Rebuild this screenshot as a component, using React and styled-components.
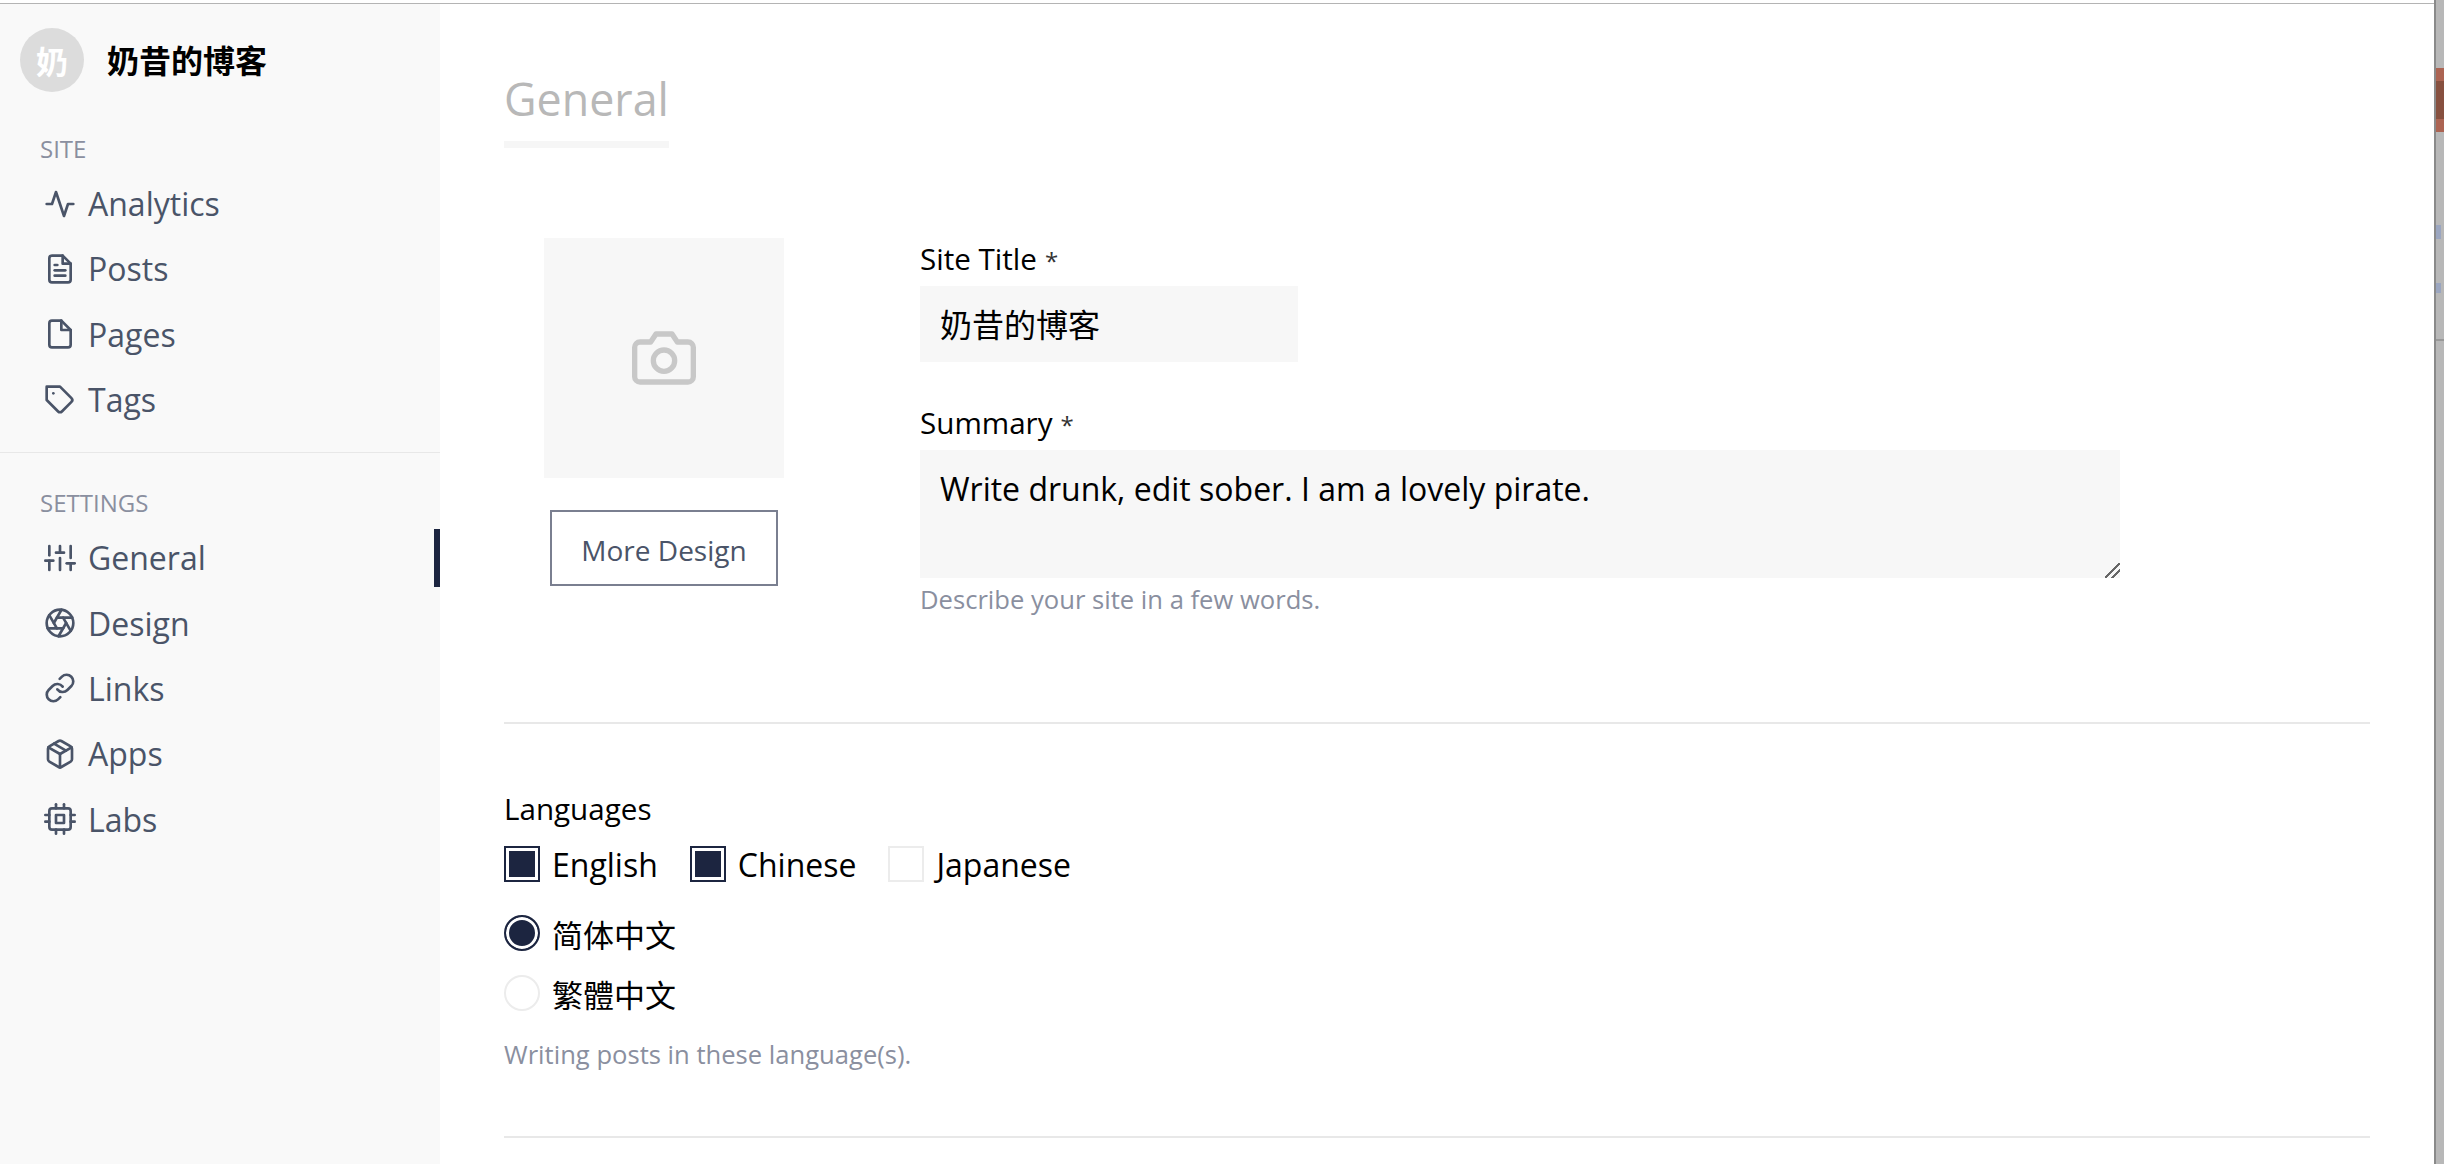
import React from 'react';
import styled, { createGlobalStyle } from 'styled-components';
import {
  FiActivity,
  FiAperture,
  FiCamera,
  FiCpu,
  FiFile,
  FiFileText,
  FiLink,
  FiPackage,
  FiSliders,
  FiTag,
} from 'react-icons/fi';

const FONT = '"Open Sans", "Noto Sans CJK SC", sans-serif';
const NAVY = '#1c2540';
const SLATE = '#4a5468';
const MUTED = '#8a8f9f';
const FIELD = '#f7f7f7';

const GlobalStyle = createGlobalStyle`
  html, body {
    margin: 0;
    height: 100%;
    overflow: hidden;
    background: #fff;
    font-family: ${FONT};
  }
  * { box-sizing: border-box; }
`;

const Screen = styled.div`
  display: flex;
  width: 2444px;
  height: 1164px;
  overflow: hidden;
`;

const Window = styled.div`
  display: flex;
  flex-direction: column;
  width: 2434px;
  padding-top: 3px;
  background: #fff;
`;

const WindowEdge = styled.div`
  flex: none;
  height: 1px;
  background: #b4b4b4;
`;

const Columns = styled.div`
  display: flex;
  flex: 1;
  min-height: 0;
`;

const Sidebar = styled.aside`
  flex: none;
  width: 440px;
  padding-top: 24px;
  background: #f9f9f9;
`;

const Brand = styled.div`
  display: flex;
  align-items: center;
  gap: 23px;
  margin: 0 0 45px 20px;
  font-size: 32px;
  font-weight: 700;
  color: #000;
`;

const BrandName = styled.span`
  margin-bottom: 2px;
`;

const Avatar = styled.div`
  display: flex;
  align-items: center;
  justify-content: center;
  width: 64px;
  height: 64px;
  border-radius: 50%;
  background: #dcdcdc;
  color: #fff;
`;

const NavTitle = styled.div`
  padding-left: 40px;
  height: 24px;
  line-height: 24px;
  font-size: 24px;
  color: ${MUTED};
  text-transform: uppercase;
`;

const NavList = styled.nav`
  margin-top: 10px;
`;

const NavItem = styled.div`
  position: relative;
  display: flex;
  align-items: center;
  gap: 12px;
  height: 65.3px;
  padding-left: 44px;
  font-size: 32px;
  color: ${SLATE};
  svg {
    flex: none;
    width: 32px;
    height: 32px;
  }
  ${({ $active }) =>
    $active &&
    `
    &::after {
      content: '';
      position: absolute;
      top: 4px;
      right: 0;
      width: 6px;
      height: 58px;
      background: ${NAVY};
    }
  `}
`;

const NavDivider = styled.div`
  height: 1px;
  margin: 20px 0 38px;
  background: #e8e8e8;
`;

const Main = styled.main`
  flex: 1;
  min-width: 0;
  padding: 0 64px;
`;

const Heading = styled.h1`
  display: inline-block;
  margin: 66px 0 0;
  height: 78px;
  line-height: 57px;
  border-bottom: 7px solid #f6f6f6;
  font-size: 44.8px;
  font-weight: 400;
  color: #b8b8b8;
`;

const Section = styled.section`
  display: flex;
  gap: 136px;
  padding: 90px 0 104px 40px;
  border-bottom: 2px solid #e8e8e8;
`;

const CoverColumn = styled.div`
  display: flex;
  flex: none;
  flex-direction: column;
  align-items: center;
  width: 240px;
`;

const Cover = styled.div`
  display: flex;
  align-items: center;
  justify-content: center;
  width: 240px;
  height: 240px;
  background: ${FIELD};
  color: #c8c8c8;
  svg {
    width: 64px;
    height: 64px;
  }
`;

const OutlineButton = styled.button`
  width: 228px;
  height: 76px;
  margin-top: 32px;
  padding: 3px 0 0;
  border: 2px solid #7a7f90;
  border-radius: 0;
  background: #fff;
  font-family: ${FONT};
  font-size: 28px;
  color: ${SLATE};
`;

const Fields = styled.div`
  flex: none;
  width: 1200px;
`;

const Label = styled.label`
  display: block;
  height: 48px;
  line-height: 42px;
  font-size: 29.6px;
  color: #000;
`;

const Required = styled.span`
  margin-left: 8px;
  font-size: 24px;
  color: #333;
`;

const TextInput = styled.input`
  display: block;
  width: 378px;
  height: 76px;
  margin-bottom: 40px;
  padding: 0 20px 2px;
  border: 0;
  border-radius: 0;
  outline: 0;
  background: ${FIELD};
  font-family: ${FONT};
  font-size: 32px;
  color: #000;
`;

const TextArea = styled.textarea`
  display: block;
  width: 1200px;
  height: 128px;
  padding: 17px 20px;
  border: 0;
  border-radius: 0;
  outline: 0;
  background: ${FIELD};
  font-family: ${FONT};
  font-size: 32px;
  line-height: 44px;
  color: #000;
  &::-webkit-resizer {
    background: linear-gradient(
      135deg,
      transparent calc(50% - 1px),
      #666 calc(50% - 1px) calc(50% + 1px),
      transparent calc(50% + 1px) calc(50% + 4px),
      #666 calc(50% + 4px) calc(50% + 6px),
      transparent calc(50% + 6px)
    );
  }
`;

const Help = styled.div`
  margin-top: ${({ $top }) => $top || 4}px;
  height: 36px;
  line-height: 36px;
  font-size: 25.6px;
  color: ${MUTED};
`;

const LanguageSection = styled.section`
  padding: 64px 0 63px;
  border-bottom: 2px solid #e8e8e8;
`;

const CheckRow = styled.div`
  display: flex;
  gap: 32px;
  margin: -2px 0 9px;
`;

const Option = styled.label`
  display: flex;
  align-items: center;
  gap: 12px;
  height: 60px;
  font-size: ${({ $cjk }) => ($cjk ? 31 : 32)}px;
  color: #000;
`;

const Check = styled.input`
  appearance: none;
  flex: none;
  width: 36px;
  height: 36px;
  margin: 0;
  border: 2px solid ${({ checked }) => (checked ? NAVY : '#ececec')};
  border-radius: ${({ type }) => (type === 'radio' ? '50%' : '0')};
  background: ${({ checked }) => (checked ? NAVY : '#fff')};
  box-shadow: inset 0 0 0 3px #fff;
`;

const Strip = styled.div`
  display: flex;
  flex: none;
  flex-direction: column;
  width: 10px;
  border-left: 2px solid #8a8a8a;
  background: #b8b8b8;
`;

const StripPhoto = styled.div`
  height: 64px;
  margin-top: 68px;
  background: linear-gradient(#ac6452 0 20%, #87503f 20% 80%, #ac6452 80%);
`;

const StripMark = styled.div`
  width: 5px;
  height: ${({ $h }) => $h}px;
  margin-top: ${({ $top }) => $top}px;
  background: #9ba6c0;
`;

const StripLine = styled.div`
  height: 2px;
  margin-top: 46px;
  background: #999;
`;

const siteNav = [
  { icon: FiActivity, label: 'Analytics' },
  { icon: FiFileText, label: 'Posts' },
  { icon: FiFile, label: 'Pages' },
  { icon: FiTag, label: 'Tags' },
];

const settingsNav = [
  { icon: FiSliders, label: 'General', active: true },
  { icon: FiAperture, label: 'Design' },
  { icon: FiLink, label: 'Links' },
  { icon: FiPackage, label: 'Apps' },
  { icon: FiCpu, label: 'Labs' },
];

const NavGroup = ({ title, items }) => (
  <>
    <NavTitle>{title}</NavTitle>
    <NavList>
      {items.map(({ icon: Icon, label, active }) => (
        <NavItem key={label} $active={active}>
          <Icon />
          {label}
        </NavItem>
      ))}
    </NavList>
  </>
);

const App = () => (
  <Screen>
    <GlobalStyle />
    <Window>
      <WindowEdge />
      <Columns>
        <Sidebar>
          <Brand>
            <Avatar>奶</Avatar>
            <BrandName>奶昔的博客</BrandName>
          </Brand>
          <NavGroup title="Site" items={siteNav} />
          <NavDivider />
          <NavGroup title="Settings" items={settingsNav} />
        </Sidebar>
        <Main>
          <Heading>General</Heading>
          <Section>
            <CoverColumn>
              <Cover>
                <FiCamera />
              </Cover>
              <OutlineButton type="button">More Design</OutlineButton>
            </CoverColumn>
            <Fields>
              <Label>
                Site Title<Required>*</Required>
              </Label>
              <TextInput readOnly value="奶昔的博客" />
              <Label>
                Summary<Required>*</Required>
              </Label>
              <TextArea readOnly value="Write drunk, edit sober. I am a lovely pirate." />
              <Help>Describe your site in a few words.</Help>
            </Fields>
          </Section>
          <LanguageSection>
            <Label>Languages</Label>
            <CheckRow>
              <Option>
                <Check type="checkbox" checked readOnly />
                English
              </Option>
              <Option>
                <Check type="checkbox" checked readOnly />
                Chinese
              </Option>
              <Option>
                <Check type="checkbox" checked={false} readOnly />
                Japanese
              </Option>
            </CheckRow>
            <Option $cjk>
              <Check type="radio" checked readOnly />
              简体中文
            </Option>
            <Option $cjk>
              <Check type="radio" checked={false} readOnly />
              繁體中文
            </Option>
            <Help $top={14}>Writing posts in these language(s).</Help>
          </LanguageSection>
        </Main>
      </Columns>
    </Window>
    <Strip>
      <StripPhoto />
      <StripMark $top={93} $h={14} />
      <StripMark $top={44} $h={10} />
      <StripLine />
    </Strip>
  </Screen>
);

export default App;
